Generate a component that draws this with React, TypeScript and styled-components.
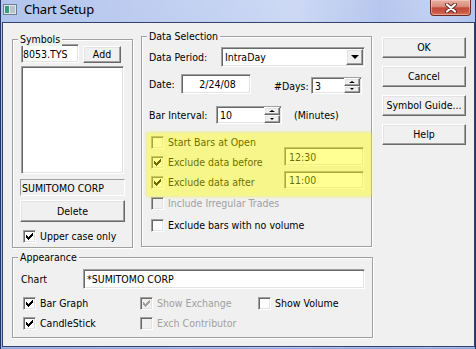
import React from 'react';
import styled, { createGlobalStyle, css } from 'styled-components';

const FONT = `"DejaVu Sans Condensed", "Liberation Sans", sans-serif`;

const Global = createGlobalStyle`
  html, body { margin: 0; padding: 0; background: #a8bde9; }
  body { width: 476px; height: 349px; overflow: hidden; }
  *, *::before, *::after { box-sizing: border-box; }
`;

const sunken = css`
  border: 1px solid;
  border-color: #a0a0a0 #ffffff #ffffff #a0a0a0;
  box-shadow: inset 1px 1px 0 #696969, inset -1px -1px 0 #e3e3e3;
`;

const raised = css`
  border: 1px solid;
  border-color: #ffffff #696969 #696969 #ffffff;
  box-shadow: inset -1px -1px 0 #a0a0a0, inset 1px 1px 0 #e3e3e3;
  background: #f0f0f0;
`;

const Frame = styled.div`
  width: 476px;
  height: 349px;
  display: flex;
  flex-direction: column;
  padding: 0 1px 2px 2px;
  font-family: ${FONT};
  font-size: 10.5px;
  color: #000;
  background:
    linear-gradient(90deg, rgba(255,255,255,0) 0%, rgba(255,255,255,0.15) 30%, rgba(255,255,255,0.35) 62%, rgba(255,255,255,0.05) 80%, rgba(255,255,255,0.2) 90%, rgba(255,255,255,0) 100%),
    linear-gradient(180deg, #b3c5ee 0%, #a6bbe8 40%, #9bb2e3 100%);
  box-shadow: inset 1px 0 0 #22356b, inset -1px 0 0 #22356b, inset 0 -1px 0 #8fa6d8;
`;

const TitleBar = styled.div`
  height: 22px;
  flex: none;
  display: flex;
  align-items: flex-start;
`;

const AppIcon = styled.svg`
  margin: 4px 0 0 1px;
  flex: none;
`;

const TitleText = styled.span`
  margin-left: 7px;
  font-family: "Noto Sans", "Open Sans", sans-serif;
  font-size: 13px;
  letter-spacing: -0.2px;
  line-height: 19px;
  color: #000;
`;

const CloseButton = styled.div`
  margin-left: auto;
  margin-right: 4px;
  width: 41px;
  height: 16px;
  border: 1px solid #6b2b25;
  border-top: none;
  border-radius: 0 0 4px 4px;
  background: linear-gradient(180deg, #eab0a3 0%, #d9897a 45%, #c44a3b 52%, #c95543 80%, #d8735e 100%);
  box-shadow: inset 0 0 0 1px rgba(255, 220, 210, 0.45);
  display: flex;
  align-items: center;
  justify-content: center;
`;

const Client = styled.div`
  flex: 1;
  display: flex;
  gap: 9px;
  padding: 13px 0 0 9px;
  background: #f0f0f0;
  border: 1px solid #33436d;
`;

const LeftCol = styled.div`
  width: 361px;
  display: flex;
  flex-direction: column;
  gap: 9px;
`;

const TopRow = styled.div`
  height: 212px;
  display: flex;
  align-items: flex-start;
  gap: 8px;
`;

const RightCol = styled.div`
  width: 84px;
  padding-top: 1px;
  display: flex;
  flex-direction: column;
  gap: 8px;
`;

const Group = styled.div<{ $w: number; $h: number; $top?: number; $pad: string }>`
  position: relative;
  width: ${p => p.$w}px;
  height: ${p => p.$h}px;
  margin-top: ${p => p.$top ?? 0}px;
  padding: ${p => p.$pad};
  border: 1px solid #a0a0a0;
  box-shadow: inset 1px 1px 0 #ffffff, 1px 1px 0 #ffffff;
  display: flex;
  flex-direction: column;
`;

const Legend = styled.span`
  position: absolute;
  top: -8px;
  left: 5px;
  padding: 0 2px;
  line-height: 14px;
  background: #f0f0f0;
`;

const PushButton = styled.div<{ $w?: number; $h: number; $mt?: number; $ml?: number }>`
  ${raised};
  width: ${p => (p.$w ? `${p.$w}px` : '100%')};
  height: ${p => p.$h}px;
  margin-top: ${p => p.$mt ?? 0}px;
  margin-left: ${p => p.$ml ?? 0}px;
  flex: none;
  display: flex;
  align-items: center;
  justify-content: center;
  padding-bottom: 1px;
`;

const Edit = styled.div<{ $w: number; $h: number; $pad?: number; $center?: boolean; $mt?: number }>`
  ${sunken};
  width: ${p => p.$w}px;
  height: ${p => p.$h}px;
  margin-top: ${p => p.$mt ?? 0}px;
  flex: none;
  background: #fff;
  display: flex;
  align-items: center;
  justify-content: ${p => (p.$center ? 'center' : 'flex-start')};
  padding: 0 0 0 ${p => p.$pad ?? 3}px;
`;

const EditText = styled.span`
  flex: 1;
  white-space: nowrap;
`;

const StaticField = styled.div`
  width: 105px;
  height: 17px;
  margin: 5px 0 0 -1px;
  border: 1px solid;
  border-color: #a0a0a0 #ffffff #ffffff #a0a0a0;
  display: flex;
  align-items: center;
  padding-left: 1px;
`;

const ListBox = styled.div`
  ${sunken};
  width: 103px;
  height: 108px;
  margin-top: 3px;
  background: #fff;
`;

const Row = styled.div<{ $h: number; $mt?: number; $align?: string }>`
  height: ${p => p.$h}px;
  margin-top: ${p => p.$mt ?? 0}px;
  display: flex;
  align-items: ${p => p.$align ?? 'center'};
  flex: none;
`;

const Field = styled.div<{ $mt?: number; $ml?: number }>`
  display: flex;
  align-items: center;
  margin-top: ${p => p.$mt ?? 0}px;
  margin-left: ${p => p.$ml ?? 0}px;
`;

const Label = styled.span<{ $w?: number; $ml?: number }>`
  width: ${p => (p.$w ? `${p.$w}px` : 'auto')};
  margin-left: ${p => p.$ml ?? 0}px;
  flex: none;
  white-space: nowrap;
`;

const SpinCol = styled.div`
  width: 16px;
  height: 100%;
  display: flex;
  flex-direction: column;
  flex: none;
`;

const SpinButton = styled.div`
  ${raised};
  flex: 1;
  display: flex;
  align-items: center;
  justify-content: center;
`;

const Arrow = styled.span<{ $dir: 'up' | 'down'; $size: number }>`
  width: 0;
  height: 0;
  border-left: ${p => p.$size}px solid transparent;
  border-right: ${p => p.$size}px solid transparent;
  ${p =>
    p.$dir === 'up'
      ? `border-bottom: ${p.$size - 1}px solid #000;`
      : `border-top: ${p.$size}px solid #000;`}
`;

const DropButton = styled.div`
  ${raised};
  width: 17px;
  height: 100%;
  flex: none;
  display: flex;
  align-items: center;
  justify-content: center;
`;

const CheckRow = styled.label<{ $disabled?: boolean; $h?: number; $mt?: number }>`
  height: ${p => p.$h ?? 20}px;
  margin-top: ${p => p.$mt ?? 0}px;
  display: flex;
  align-items: center;
  gap: 4px;
  padding-left: 2px;
  white-space: nowrap;
  color: ${p => (p.$disabled ? '#a0a0a0' : '#000')};
`;

const CheckBox = styled.span<{ $disabled?: boolean }>`
  ${sunken};
  width: 13px;
  height: 13px;
  flex: none;
  display: flex;
  align-items: center;
  justify-content: center;
  background: ${p => (p.$disabled ? '#f0f0f0' : '#fff')};
`;

const CheckArea = styled.div`
  margin-top: 8px;
  display: flex;
  flex: none;
`;

const CheckColumn = styled.div`
  display: flex;
  flex-direction: column;
`;

const TimeColumn = styled.div`
  margin-left: auto;
  padding-top: 15px;
  display: flex;
  flex-direction: column;
  gap: 5px;
`;

const Highlight = styled.div`
  position: absolute;
  left: 5px;
  top: 96px;
  width: 224px;
  height: 63px;
  background: rgba(255, 255, 0, 0.42);
  border-radius: 2px;
  box-shadow: 0 0 3px 1px rgba(235, 235, 60, 0.55);
  pointer-events: none;
`;

const CheckGrid = styled.div`
  margin-top: 4px;
  display: grid;
  grid-template-columns: 117px 118px auto;
  grid-auto-rows: 20px;
`;

const Check: React.FC<{ checked?: boolean; disabled?: boolean; label: string; h?: number; mt?: number }> = ({
  checked,
  disabled,
  label,
  h,
  mt,
}) => (
  <CheckRow $disabled={disabled} $h={h} $mt={mt}>
    <CheckBox $disabled={disabled}>
      {checked && (
        <svg width="7" height="7" viewBox="0 0 7 7" shapeRendering="crispEdges">
          <path
            d="M0 2h1v1h1v1h1v-1h1v-1h1v-1h1v-1h1v3h-1v1h-1v1h-1v1h-1v1h-1v-1h-1v-1h-1z"
            fill={disabled ? '#a0a0a0' : '#000'}
          />
        </svg>
      )}
    </CheckBox>
    <span>{label}</span>
  </CheckRow>
);

const Spin: React.FC = () => (
  <SpinCol>
    <SpinButton>
      <Arrow $dir="up" $size={3} />
    </SpinButton>
    <SpinButton>
      <Arrow $dir="down" $size={2} />
    </SpinButton>
  </SpinCol>
);

export default function App() {
  return (
    <>
      <Global />
      <Frame>
        <TitleBar>
          <AppIcon width="14" height="11" viewBox="0 0 14 11">
            <rect x="0.5" y="0.5" width="13" height="10" fill="#dfe5ea" stroke="#6f7f8f" />
            <rect x="2" y="2" width="4" height="7" fill="#3a9a7c" />
            <rect x="7" y="2" width="5" height="7" fill="#b8c4cc" />
          </AppIcon>
          <TitleText>Chart Setup</TitleText>
          <CloseButton>
            <svg width="12" height="10" viewBox="0 0 12 10">
              <path d="M2 1.5L10 8.5M10 1.5L2 8.5" stroke="#5a2a25" strokeWidth="4" strokeLinecap="round" />
              <path d="M2 1.5L10 8.5M10 1.5L2 8.5" stroke="#ffffff" strokeWidth="2.2" strokeLinecap="round" />
            </svg>
          </CloseButton>
        </TitleBar>
        <Client>
          <LeftCol>
            <TopRow>
              <Group $w={121} $h={209} $top={3} $pad="4px 0 0 8px">
                <Legend>Symbols</Legend>
                <Row $h={19} $align="flex-end">
                  <Edit $w={58} $h={19} $pad={1}>
                    <EditText>8053.TYS</EditText>
                  </Edit>
                  <PushButton $w={38} $h={17} $ml={4}>
                    Add
                  </PushButton>
                </Row>
                <ListBox />
                <StaticField>SUMITOMO CORP</StaticField>
                <PushButton $w={105} $h={22} $mt={4} $ml={-1}>
                  Delete
                </PushButton>
                <Check checked label="Upper case only" mt={4} />
              </Group>

              <Group $w={231} $h={211} $pad="10px 7px 0 7px">
                <Legend>Data Selection</Legend>
                <Row $h={20}>
                  <Label $w={72}>Data Period:</Label>
                  <Edit $w={144} $h={20} style={{ paddingRight: 1 }}>
                    <EditText>IntraDay</EditText>
                    <DropButton style={{ height: 16 }}>
                      <Arrow $dir="down" $size={4} />
                    </DropButton>
                  </Edit>
                </Row>
                <Row $h={21} $mt={7} $align="flex-start">
                  <Field>
                    <Label $w={32}>Date:</Label>
                    <Edit $w={70} $h={20} $center>
                      <span>2/24/08</span>
                    </Edit>
                  </Field>
                  <Field $mt={3} $ml={23}>
                    <Label $w={37}>#Days:</Label>
                    <Edit $w={51} $h={17} style={{ paddingRight: 1 }}>
                      <EditText>3</EditText>
                      <Spin />
                    </Edit>
                  </Field>
                </Row>
                <Row $h={18} $mt={11}>
                  <Label $w={67}>Bar Interval:</Label>
                  <Edit $w={66} $h={18} style={{ paddingRight: 1 }}>
                    <EditText>10</EditText>
                    <Spin />
                  </Edit>
                  <Label $ml={12}>(Minutes)</Label>
                </Row>
                <CheckArea>
                  <CheckColumn>
                    <Check label="Start Bars at Open" />
                    <Check checked label="Exclude data before" />
                    <Check checked label="Exclude data after" />
                  </CheckColumn>
                  <TimeColumn>
                    <Edit $w={80} $h={19} $pad={4}>
                      <EditText>12:30</EditText>
                    </Edit>
                    <Edit $w={80} $h={18} $pad={4}>
                      <EditText>11:00</EditText>
                    </Edit>
                  </TimeColumn>
                </CheckArea>
                <Check disabled label="Include Irregular Trades" mt={1} />
                <Check label="Exclude bars with no volume" mt={2} />
                <Highlight />
              </Group>
            </TopRow>

            <Group $w={361} $h={81} $pad="11px 8px 0 8px">
              <Legend>Appearance</Legend>
              <Row $h={20}>
                <Label $w={62}>Chart</Label>
                <Edit $w={282} $h={20}>
                  <EditText>*SUMITOMO CORP</EditText>
                </Edit>
              </Row>
              <CheckGrid>
                <Check checked label="Bar Graph" />
                <Check checked disabled label="Show Exchange" />
                <Check label="Show Volume" />
                <Check checked label="CandleStick" />
                <Check disabled label="Exch Contributor" />
              </CheckGrid>
            </Group>
          </LeftCol>

          <RightCol>
            <PushButton $h={21}>OK</PushButton>
            <PushButton $h={21}>Cancel</PushButton>
            <PushButton $h={21}>Symbol Guide...</PushButton>
            <PushButton $h={21}>Help</PushButton>
          </RightCol>
        </Client>
      </Frame>
    </>
  );
}
